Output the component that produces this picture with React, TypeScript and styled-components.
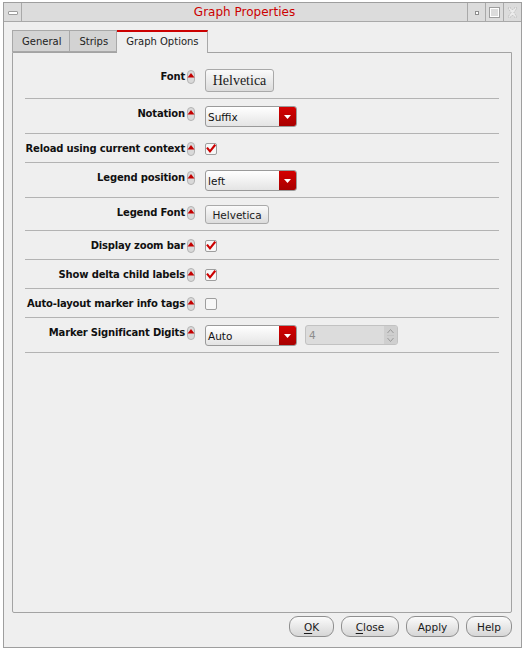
import React from 'react';
import styled, { createGlobalStyle } from 'styled-components';

const GlobalStyle = createGlobalStyle`
  html, body {
    margin: 0;
    background: #ffffff;
  }
  body {
    font-family: "DejaVu Sans", "Liberation Sans", sans-serif;
    color: #1a1a1a;
  }
`;

type Row = {
  label: string;
  kind: 'fontButton' | 'select' | 'check' | 'button' | 'selectSpin';
  value?: string;
  checked?: boolean;
};

const rows: Row[] = [
  { label: 'Font', kind: 'fontButton', value: 'Helvetica' },
  { label: 'Notation', kind: 'select', value: 'Suffix' },
  { label: 'Reload using current context', kind: 'check', checked: true },
  { label: 'Legend position', kind: 'select', value: 'left' },
  { label: 'Legend Font', kind: 'button', value: 'Helvetica' },
  { label: 'Display zoom bar', kind: 'check', checked: true },
  { label: 'Show delta child labels', kind: 'check', checked: true },
  { label: 'Auto-layout marker info tags', kind: 'check', checked: false },
  { label: 'Marker Significant Digits', kind: 'selectSpin', value: 'Auto' },
];

const tabs = ['General', 'Strips', 'Graph Options'];

const ArrowMark = () => (
  <ArrowWrap>
    <svg width="8" height="14" viewBox="0 0 8 14">
      <rect x="0.5" y="0.5" width="7" height="13" rx="3.5" fill="#d9d9d9" stroke="#b3b3b3" />
      <path d="M0.5 7.5 L4 3 L7.5 7.5 Z" fill="#c40000" />
    </svg>
  </ArrowWrap>
);

const CheckBox = ({ checked }: { checked?: boolean }) => (
  <CheckWrap>
    <svg width="12" height="12" viewBox="0 0 12 12">
      <rect x="0.5" y="0.5" width="11" height="11" rx="1.5" fill="#f7f7f7" stroke="#9e9e9e" />
      {checked && (
        <path d="M2.6 5.4 L5 8.4 L9.6 2.6" fill="none" stroke="#cc0000" strokeWidth="2.1" strokeLinecap="square" />
      )}
    </svg>
  </CheckWrap>
);

const Select = ({ value }: { value?: string }) => (
  <SelectBox>
    <SelectText>{value}</SelectText>
    <SelectButton>
      <svg width="7" height="4" viewBox="0 0 7 4">
        <path d="M0 0 L7 0 L3.5 4 Z" fill="#ffffff" />
      </svg>
    </SelectButton>
  </SelectBox>
);

const Spin = ({ value }: { value: string }) => (
  <SpinBox>
    <SpinText>{value}</SpinText>
    <SpinArrows>
      <svg width="9" height="17" viewBox="0 0 9 17">
        <path d="M1.5 6 L4.5 2.5 L7.5 6" fill="none" stroke="#9a9a9a" />
        <line x1="1" y1="8.5" x2="8" y2="8.5" stroke="#c4c4c4" />
        <path d="M1.5 11 L4.5 14.5 L7.5 11" fill="none" stroke="#9a9a9a" />
      </svg>
    </SpinArrows>
  </SpinBox>
);

const renderWidget = (row: Row) => {
  switch (row.kind) {
    case 'fontButton':
      return <FontButton>{row.value}</FontButton>;
    case 'button':
      return <SmallButton>{row.value}</SmallButton>;
    case 'select':
      return <Select value={row.value} />;
    case 'check':
      return <CheckBox checked={row.checked} />;
    case 'selectSpin':
      return (
        <Inline>
          <Select value={row.value} />
          <Spin value="4" />
        </Inline>
      );
  }
};

export default function App() {
  return (
    <>
      <GlobalStyle />
      <Window>
        <TitleBar>
          <TitleBox>
            <MinIcon />
          </TitleBox>
          <Title>Graph Properties</Title>
          <TitleBox $side="right">
            <DotIcon />
          </TitleBox>
          <TitleBox $side="right">
            <MaxIcon />
          </TitleBox>
          <TitleBox $side="right">
            <svg width="11" height="11" viewBox="0 0 11 11">
              <path
                d="M1 1 L4 1 L5.5 3 L7 1 L10 1 L7 5.5 L10 10 L7 10 L5.5 8 L4 10 L1 10 L4 5.5 Z"
                fill="#ececec"
                stroke="#b9b9b9"
                strokeDasharray="1 1"
              />
            </svg>
          </TitleBox>
        </TitleBar>

        <Body>
          <TabRow>
            {tabs.map((t) => (
              <Tab key={t} $active={t === 'Graph Options'}>
                {t}
              </Tab>
            ))}
          </TabRow>
          <Panel>
            <Content>
              {rows.map((row) => (
                <FormRow key={row.label}>
                  <LabelCell>
                    <Label>{row.label}</Label>
                    <ArrowMark />
                  </LabelCell>
                  {renderWidget(row)}
                </FormRow>
              ))}
            </Content>
          </Panel>
          <ButtonRow>
            <DialogButton $w={45}>
              <u>O</u>K
            </DialogButton>
            <DialogButton $w={58}>
              <u>C</u>lose
            </DialogButton>
            <DialogButton $w={53}>Apply</DialogButton>
            <DialogButton $w={46}>Help</DialogButton>
          </ButtonRow>
        </Body>
      </Window>
    </>
  );
}

const Window = styled.div`
  box-sizing: border-box;
  margin: 2px 0 0 3px;
  width: 519px;
  height: 646px;
  border: 1px solid #9e9e9e;
  background: #efefef;
  display: flex;
  flex-direction: column;
`;

const TitleBar = styled.div`
  display: flex;
  height: 18px;
  border-bottom: 1px solid #a9a9a9;
  background: #dcdcdc;
`;

const TitleBox = styled.div<{ $side?: 'right' }>`
  width: 17px;
  flex: none;
  display: flex;
  align-items: center;
  justify-content: center;
  border-${(p) => (p.$side ? 'left' : 'right')}: 1px solid #a9a9a9;
`;

const Title = styled.div`
  flex: 1;
  text-align: center;
  font-size: 12px;
  line-height: 18px;
  color: #cc0000;
`;

const MinIcon = styled.div`
  width: 8px;
  height: 2px;
  border: 1px solid #9c9c9c;
  border-radius: 1px;
  background: #ffffff;
  margin-top: 2px;
`;

const DotIcon = styled.div`
  width: 2px;
  height: 2px;
  border: 1px solid #8e8e8e;
  background: #ffffff;
  margin-top: 2px;
`;

const MaxIcon = styled.div`
  width: 9px;
  height: 9px;
  border: 1px solid #9e9e9e;
  box-shadow: inset 0 0 0 1px #ffffff;
`;

const Body = styled.div`
  flex: 1;
  display: flex;
  flex-direction: column;
  padding: 8px 9px 0 8px;
  min-height: 0;
`;

const TabRow = styled.div`
  display: flex;
  align-items: flex-end;
  height: 22px;
`;

const Tab = styled.div<{ $active?: boolean }>`
  box-sizing: border-box;
  height: ${(p) => (p.$active ? '23px' : '22px')};
  padding: 0 8px 0 9px;
  font-size: 10px;
  line-height: ${(p) => (p.$active ? '20px' : '21px')};
  color: #222;
  background: ${(p) => (p.$active ? '#efefef' : '#d3d3d3')};
  border: 1px solid #a8a8a8;
  border-top: ${(p) => (p.$active ? '2px solid #cc0000' : '1px solid #a8a8a8')};
  border-bottom: ${(p) => (p.$active ? 'none' : '1px solid #a8a8a8')};
  margin-bottom: ${(p) => (p.$active ? '-1px' : '0')};
  position: relative;
  z-index: ${(p) => (p.$active ? 1 : 0)};
  &:not(:first-child) {
    border-left: 0;
  }
`;

const Panel = styled.div`
  flex: 1;
  box-sizing: border-box;
  border: 1px solid #a3a3a3;
  border-radius: 0 0 2px 2px;
  background: #efefef;
  min-height: 0;
`;

const Content = styled.div`
  padding: 9px 12px 0 12px;
`;

const FormRow = styled.div`
  display: flex;
  align-items: flex-start;
  padding: 7px 0 6px;
  border-bottom: 1px solid #b3b3b3;
`;

const LabelCell = styled.div`
  box-sizing: border-box;
  width: 180px;
  flex: none;
  display: flex;
  justify-content: flex-end;
  align-items: flex-start;
  gap: 2px;
  padding-right: 10px;
`;

const Label = styled.span`
  font-size: 10px;
  font-weight: bold;
  line-height: 15px;
  white-space: nowrap;
  letter-spacing: -0.17px;
  color: #111;
`;

const ArrowWrap = styled.span`
  display: flex;
  margin-top: 1px;
`;

const CheckWrap = styled.div`
  height: 15px;
  display: flex;
  align-items: center;
`;

const FontButton = styled.div`
  box-sizing: border-box;
  width: 69px;
  height: 23px;
  display: flex;
  align-items: center;
  justify-content: center;
  font-family: "Liberation Serif", serif;
  font-size: 14px;
  color: #1a1a1a;
  border: 1px solid #a9a9a9;
  border-radius: 3px;
  background: linear-gradient(#fafafa, #dcdcdc);
`;

const SmallButton = styled.div`
  box-sizing: border-box;
  width: 64px;
  height: 19px;
  display: flex;
  align-items: center;
  justify-content: center;
  font-size: 10.5px;
  color: #1a1a1a;
  border: 1px solid #a9a9a9;
  border-radius: 3px;
  background: linear-gradient(#fafafa, #dcdcdc);
`;

const SelectBox = styled.div`
  box-sizing: border-box;
  width: 92px;
  height: 21px;
  display: flex;
  border: 1px solid #9a9a9a;
  border-radius: 3px;
  overflow: hidden;
  background: linear-gradient(#ffffff, #e4e4e4);
`;

const SelectText = styled.div`
  flex: 1;
  padding-left: 2px;
  font-size: 10.5px;
  line-height: 20px;
  color: #111;
`;

const SelectButton = styled.div`
  width: 17px;
  display: flex;
  align-items: center;
  justify-content: center;
  background: linear-gradient(#d40000, #a80000);
`;

const Inline = styled.div`
  display: flex;
  align-items: flex-start;
  gap: 8px;
`;

const SpinBox = styled.div`
  box-sizing: border-box;
  width: 93px;
  height: 20px;
  display: flex;
  border: 1px solid #c2c2c2;
  border-radius: 3px;
  background: #dcdcdc;
`;

const SpinText = styled.div`
  flex: 1;
  padding-left: 3px;
  font-size: 10.5px;
  line-height: 18px;
  color: #8c8c8c;
`;

const SpinArrows = styled.div`
  width: 13px;
  display: flex;
  align-items: center;
  justify-content: center;
  background: #cfcfcf;
  border-radius: 0 2px 2px 0;
`;

const ButtonRow = styled.div`
  display: flex;
  justify-content: flex-end;
  gap: 7px;
  padding-top: 3px;
  height: 34px;
  box-sizing: border-box;
`;

const DialogButton = styled.div<{ $w: number }>`
  box-sizing: border-box;
  width: ${(p) => p.$w}px;
  height: 21px;
  display: flex;
  align-items: center;
  justify-content: center;
  font-size: 10.5px;
  color: #1a1a1a;
  border: 1px solid #8f8f8f;
  border-radius: 9px;
  background: linear-gradient(#fbfbfb, #d6d6d6);
  u {
    text-decoration: underline;
    text-underline-offset: 2px;
  }
`;
